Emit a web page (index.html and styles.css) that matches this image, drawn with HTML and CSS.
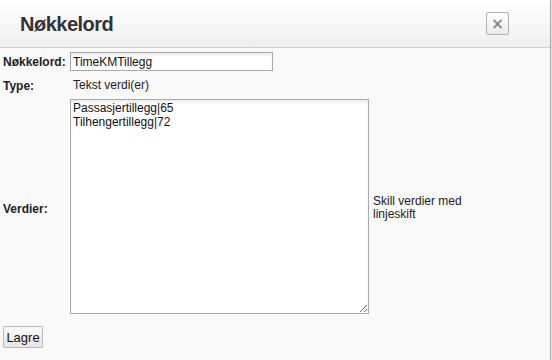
FILE: index.html
```html
<!DOCTYPE html>
<html>
<head>
  <meta charset="utf-8">
  <meta name="viewport" content="width=device-width" />
  <link rel="stylesheet" href="styles.css">
  <title>Nøkkelord</title>
</head>
<body>
  <div id="page">
    <div id="dialog">
      <div id="header">
        <div id="title">Nøkkelord</div>
        <button id="closeBtn" type="button">&times;</button>
      </div>
      <div id="content">
        <div class="form">
          <label class="lbl" for="keyword">Nøkkelord:</label>
          <div class="field"><input id="keyword" type="text" value="TimeKMTillegg" /></div>
          <div class="hint"></div>

          <div class="lbl typeLbl">Type:</div>
          <div class="field typeVal">Tekst verdi(er)</div>
          <div class="hint"></div>

          <label class="lbl valuesLbl" for="values">Verdier:</label>
          <div class="field"><textarea id="values">Passasjertillegg|65
Tilhengertillegg|72</textarea></div>
          <div class="hint valuesHint">Skill verdier med linjeskift</div>
        </div>
        <input id="saveBtn" type="button" value="Lagre" />
      </div>
    </div>
    <div id="behind"></div>
  </div>
</body>
</html>
```

FILE: styles.css
```css
html, body {
  margin: 0;
  padding: 0;
  background-color: #f9f9f9;
}
#page {
  display: flex;
  height: 360px;
}
#dialog {
  width: 550px;
  border-right: 1px solid #a8a8a8;
  background-color: #f9f9f9;
  font-family: "Liberation Sans", Arial, sans-serif;
  color: #222;
}
#behind {
  flex: 1;
  background-color: #e2e2e2;
}
#header {
  display: flex;
  align-items: center;
  justify-content: space-between;
  height: 47px;
  padding: 0 41px 0 20px;
  background: linear-gradient(#ffffff, #efefef);
  border-bottom: 1px solid #cfcfcf;
}
#title {
  font-size: 20px;
  font-weight: bold;
  color: #333;
  letter-spacing: -0.5px;
  padding-top: 1px;
}
#closeBtn {
  width: 23px;
  height: 23px;
  margin-top: 0;
  padding: 0;
  border: 1px solid #b0b0b0;
  border-radius: 2px;
  background: linear-gradient(#fdfdfd, #ececec);
  color: #888;
  font-family: "DejaVu Sans", sans-serif;
  font-size: 15px;
  font-weight: bold;
  line-height: 20px;
}
#content {
  padding: 4px 0 0 3px;
}
.form {
  display: grid;
  grid-template-columns: 63px 299px 120px;
  column-gap: 4px;
  font-size: 12px;
}
.lbl {
  font-weight: bold;
  color: #222;
}
.form label.lbl {
  padding-top: 3px;
}
.typeLbl {
  padding-top: 8px;
}
.typeVal {
  padding: 7px 0 0 3px;
  color: #222;
}
.form label.valuesLbl {
  align-self: center;
  padding-top: 10px;
}
.hint {
  align-self: center;
  color: #222;
  line-height: 13px;
  padding-top: 9px;
}
input[type=text], textarea {
  box-sizing: border-box;
  border: 1px solid #a9a9a9;
  background-color: #fff;
  box-shadow: inset 0 2px 3px rgba(0, 0, 0, 0.08);
  font-family: "Liberation Sans", Arial, sans-serif;
  font-size: 12px;
  color: #111;
  margin: 0;
}
input[type=text] {
  width: 203px;
  height: 19px;
  padding: 0 2px;
}
textarea {
  display: block;
  width: 299px;
  height: 215px;
  margin-top: 6px;
  padding: 1px 2px;
  line-height: 14px;
  resize: both;
}
#saveBtn {
  margin-top: 12px;
  width: 40px;
  height: 22px;
  padding: 0;
  border: 1px solid #bbb;
  border-radius: 1px;
  background: linear-gradient(#fafafa, #e6e6e6);
  font-family: "Liberation Sans", Arial, sans-serif;
  font-size: 13px;
  color: #111;
}
```
